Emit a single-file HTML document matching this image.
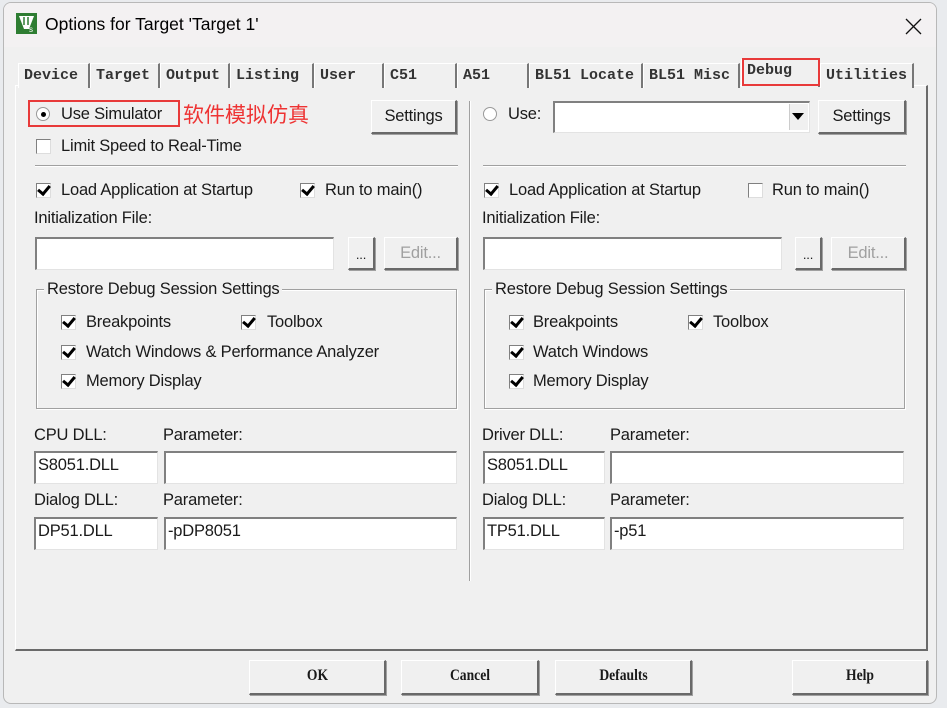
<!DOCTYPE html><html><head><meta charset="utf-8"><style>
*{margin:0;padding:0;box-sizing:border-box}
body{width:947px;height:708px;background:#e9ebee;position:relative;overflow:hidden;font-family:"Liberation Sans",Arial,sans-serif;font-size:16.5px;color:#1a1a1a;letter-spacing:-0.2px}
.a{position:absolute;white-space:nowrap}
.win{position:absolute;left:3px;top:2px;width:934px;height:702px;background:#f0f0f0;border:1px solid #b8b8b8;border-radius:8px;overflow:hidden}
.tb{position:absolute;left:0;top:0;width:100%;height:44px;background:#f3f1f2}
.tab{position:absolute;top:60px;height:25px;border:1px solid #fff;border-right:2px solid #777;border-bottom:none;font-family:"Liberation Mono",monospace;font-weight:bold;font-size:15px;letter-spacing:0;padding:3px 0 0 5px;color:#333;background:#f0f0f0}
.edit{position:absolute;background:#fff;border-top:2px solid #808080;border-left:2px solid #808080;border-right:1px solid #e3e3e3;border-bottom:1px solid #e3e3e3;padding:3px 0 0 2px;font-size:16.5px}
.btn{position:absolute;background:#f0f0f0;border-top:1px solid #fff;border-left:1px solid #fff;border-right:2px solid #696969;border-bottom:2px solid #696969;box-shadow:1px 1px 0 #a0a0a0;text-align:center;font-size:16.5px}
.cb{position:absolute;width:15px;height:15px;background:#fff;border-top:1.5px solid #808080;border-left:1.5px solid #808080;border-right:1px solid #ddd;border-bottom:1px solid #ddd}
.cb.c::after{content:"";position:absolute;left:3px;top:-1px;width:5px;height:9px;border:solid #000;border-width:0 3px 3px 0;transform:rotate(40deg)}
.grp{position:absolute;border:1px solid #a0a0a0;box-shadow:1px 1px 0 #fff inset,1px 1px 0 #fff}
.bb{position:absolute;font-family:"Liberation Serif",serif;font-weight:bold;font-size:16px;letter-spacing:0;transform:scaleX(.85)}
</style></head><body>
<div class="win">
<div class="tb"></div>
<svg class="a" style="left:12px;top:10px" width="21" height="21"><rect width="21" height="21" fill="#2e7d32"/><path d="M3 3h15l-5 13h-5z" fill="#fff"/><path d="M8 4v8M12 4v8" stroke="#2e7d32" stroke-width="1.5"/><text x="13" y="19" font-size="8" fill="#fff" font-family="Liberation Sans">s</text></svg>
<div class="a" style="left:41px;top:11px;font-size:17.5px;color:#000;letter-spacing:0">Options for Target 'Target 1'</div>
<svg class="a" style="left:901px;top:15px" width="17" height="17"><path d="M1 1L16 16M16 1L1 16" stroke="#111" stroke-width="1.3"/></svg>

<div class="a" style="left:11px;top:82px;width:913px;height:566px;border-top:1px solid #fff;border-left:1px solid #fff;border-right:2px solid #6a6a6a;border-bottom:2px solid #6a6a6a"></div>
<div class="tab" style="left:14px;width:72px">Device</div>
<div class="tab" style="left:86px;width:70px">Target</div>
<div class="tab" style="left:156px;width:70px">Output</div>
<div class="tab" style="left:226px;width:84px">Listing</div>
<div class="tab" style="left:310px;width:70px">User</div>
<div class="tab" style="left:380px;width:73px">C51</div>
<div class="tab" style="left:453px;width:72px">A51</div>
<div class="tab" style="left:525px;width:114px">BL51 Locate</div>
<div class="tab" style="left:639px;width:97px">BL51 Misc</div>
<div class="tab" style="left:737px;top:56px;height:28px;width:79px;border-right-color:#777;border-bottom:none;padding-top:2px">Debug</div>
<div class="tab" style="left:816px;width:94px">Utilities</div>
<div class="a" style="left:738px;top:55px;width:78px;height:28px;border:2px solid #e83a3a"></div>

<div class="a" style="left:465px;top:98px;width:2px;height:480px;border-left:1px solid #a0a0a0;border-right:1px solid #fff"></div>
<div class="a" style="left:31px;top:162px;width:423px;height:2px;border-top:1px solid #a0a0a0;border-bottom:1px solid #fff"></div>
<div class="a" style="left:479px;top:162px;width:423px;height:2px;border-top:1px solid #a0a0a0;border-bottom:1px solid #fff"></div>

<!-- LEFT -->
<div class="a" style="left:32px;top:104px;width:14px;height:14px;border-radius:50%;background:#fff;border:1px solid #999"></div>
<div class="a" style="left:37px;top:109px;width:5px;height:5px;border-radius:50%;background:#000"></div>
<div class="a" style="left:57px;top:102px">Use Simulator</div>
<div class="a" style="left:24px;top:97px;width:152px;height:27px;border:2px solid #e83a3a"></div>
<div class="a" style="left:179px;top:96px;font-size:21px;color:#ee3333;font-family:'Noto Sans CJK SC',sans-serif;letter-spacing:0">软件模拟仿真</div>
<div class="btn" style="left:367px;top:97px;width:86px;height:34px;padding-top:6px">Settings</div>
<div class="cb" style="left:32px;top:136px"></div>
<div class="a" style="left:57px;top:134px">Limit Speed to Real-Time</div>

<div class="cb c" style="left:32px;top:180px"></div>
<div class="a" style="left:57px;top:178px">Load Application at Startup</div>
<div class="cb c" style="left:296px;top:180px"></div>
<div class="a" style="left:321px;top:178px">Run to main()</div>
<div class="a" style="left:30px;top:206px">Initialization File:</div>
<div class="edit" style="left:31px;top:234px;width:299px;height:33px"></div>
<div class="btn" style="left:344px;top:234px;width:27px;height:33px;font-size:13px;padding-top:9px">...</div>
<div class="btn" style="left:380px;top:234px;width:74px;height:33px;color:#a0a0a0;padding-top:6px">Edit...</div>
<div class="grp" style="left:32px;top:286px;width:421px;height:120px"></div>
<div class="a" style="left:40px;top:277px;background:#f0f0f0;padding:0 3px">Restore Debug Session Settings</div>
<div class="cb c" style="left:57px;top:312px"></div><div class="a" style="left:82px;top:310px">Breakpoints</div>
<div class="cb c" style="left:237px;top:312px"></div><div class="a" style="left:263px;top:310px">Toolbox</div>
<div class="cb c" style="left:57px;top:342px"></div><div class="a" style="left:82px;top:340px">Watch Windows &amp; Performance Analyzer</div>
<div class="cb c" style="left:57px;top:371px"></div><div class="a" style="left:82px;top:369px">Memory Display</div>

<div class="a" style="left:30px;top:423px">CPU DLL:</div>
<div class="a" style="left:159px;top:423px">Parameter:</div>
<div class="edit" style="left:30px;top:448px;width:124px;height:33px">S8051.DLL</div>
<div class="edit" style="left:160px;top:448px;width:293px;height:33px"></div>
<div class="a" style="left:30px;top:488px">Dialog DLL:</div>
<div class="a" style="left:159px;top:488px">Parameter:</div>
<div class="edit" style="left:30px;top:514px;width:124px;height:33px">DP51.DLL</div>
<div class="edit" style="left:160px;top:514px;width:293px;height:33px">-pDP8051</div>

<!-- RIGHT -->
<div class="a" style="left:479px;top:104px;width:14px;height:14px;border-radius:50%;background:#fff;border:1px solid #999"></div>
<div class="a" style="left:504px;top:102px">Use:</div>
<div class="edit" style="left:549px;top:98px;width:257px;height:32px"></div>
<div class="a" style="left:785px;top:101px;width:19px;height:26px;background:#f0f0f0;border-left:1px solid #ccc"></div>
<svg class="a" style="left:788px;top:110px" width="12" height="8"><path d="M0 0h12L6 7z" fill="#000"/></svg>
<div class="btn" style="left:814px;top:97px;width:88px;height:34px;padding-top:6px">Settings</div>

<div class="cb c" style="left:480px;top:180px"></div>
<div class="a" style="left:505px;top:178px">Load Application at Startup</div>
<div class="cb" style="left:744px;top:180px"></div>
<div class="a" style="left:768px;top:178px">Run to main()</div>
<div class="a" style="left:478px;top:206px">Initialization File:</div>
<div class="edit" style="left:479px;top:234px;width:299px;height:33px"></div>
<div class="btn" style="left:791px;top:234px;width:27px;height:33px;font-size:13px;padding-top:9px">...</div>
<div class="btn" style="left:827px;top:234px;width:75px;height:33px;color:#a0a0a0;padding-top:6px">Edit...</div>
<div class="grp" style="left:480px;top:286px;width:421px;height:120px"></div>
<div class="a" style="left:488px;top:277px;background:#f0f0f0;padding:0 3px">Restore Debug Session Settings</div>
<div class="cb c" style="left:505px;top:312px"></div><div class="a" style="left:529px;top:310px">Breakpoints</div>
<div class="cb c" style="left:684px;top:312px"></div><div class="a" style="left:709px;top:310px">Toolbox</div>
<div class="cb c" style="left:505px;top:342px"></div><div class="a" style="left:529px;top:340px">Watch Windows</div>
<div class="cb c" style="left:505px;top:371px"></div><div class="a" style="left:529px;top:369px">Memory Display</div>

<div class="a" style="left:478px;top:423px">Driver DLL:</div>
<div class="a" style="left:606px;top:423px">Parameter:</div>
<div class="edit" style="left:479px;top:448px;width:122px;height:33px">S8051.DLL</div>
<div class="edit" style="left:606px;top:448px;width:294px;height:33px"></div>
<div class="a" style="left:478px;top:488px">Dialog DLL:</div>
<div class="a" style="left:606px;top:488px">Parameter:</div>
<div class="edit" style="left:479px;top:514px;width:122px;height:33px">TP51.DLL</div>
<div class="edit" style="left:606px;top:514px;width:294px;height:33px">-p51</div>

<div class="btn" style="left:245px;top:657px;width:137px;height:35px"></div>
<div class="bb" style="left:245px;top:664px;width:137px;text-align:center">OK</div>
<div class="btn" style="left:397px;top:657px;width:138px;height:35px"></div>
<div class="bb" style="left:397px;top:664px;width:138px;text-align:center">Cancel</div>
<div class="btn" style="left:551px;top:657px;width:137px;height:35px"></div>
<div class="bb" style="left:551px;top:664px;width:137px;text-align:center">Defaults</div>
<div class="btn" style="left:788px;top:657px;width:136px;height:35px"></div>
<div class="bb" style="left:788px;top:664px;width:136px;text-align:center">Help</div>
</div>
</body></html>
